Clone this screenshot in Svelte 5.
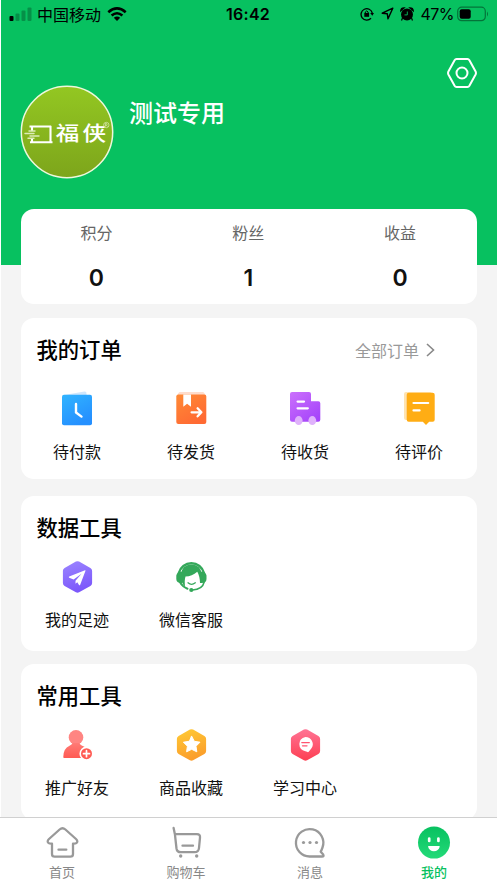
<script lang="ts">
    type Item = { icon: string; label: string };

    const stats = [
        { label: "积分", value: 0 },
        { label: "粉丝", value: 1 },
        { label: "收益", value: 0 },
    ];

    const orders: Item[] = [
        { icon: "pay", label: "待付款" },
        { icon: "ship", label: "待发货" },
        { icon: "truck", label: "待收货" },
        { icon: "review", label: "待评价" },
    ];

    const dataTools: Item[] = [
        { icon: "plane", label: "我的足迹" },
        { icon: "service", label: "微信客服" },
    ];

    const commonTools: Item[] = [
        { icon: "friend", label: "推广好友" },
        { icon: "star", label: "商品收藏" },
        { icon: "learn", label: "学习中心" },
    ];

    const tabs: Item[] = [
        { icon: "home", label: "首页" },
        { icon: "cart", label: "购物车" },
        { icon: "message", label: "消息" },
        { icon: "me", label: "我的" },
    ];

    let active = $state("me");

    const hex = "M16.9 2.600Q18.500 1.700 20.100 2.600L31.400 8.900Q33.100 9.900 33.100 11.800V24Q33.100 25.900 31.400 26.900L20.100 33.300Q18.500 34.200 16.900 33.300L5.600 26.900Q3.900 25.900 3.900 24V11.800Q3.900 9.900 5.600 8.900Z";
</script>

{#snippet glyph(name: string)}
    <svg class="glyph" viewBox="0 0 36 36" fill="none" stroke-linecap="round" stroke-linejoin="round">
        {#if name === "pay"}
            <path d="M5 4 25.500 0.500Q27 0.500 27.300 1.500L28 6H5Z" fill="#cfe6fc" />
            <rect x="3" y="3.700" width="30" height="30.500" rx="2" fill="url(#blue)" />
            <path d="M17 13V21.500L22.500 25.600" stroke="#fff" stroke-width="2.400" />
        {:else if name === "ship"}
            <path d="M7 1H30Q31 1 33 5H4Q5.500 1 7 1Z" fill="#ffdccb" />
            <rect x="3.300" y="3.600" width="30" height="29.400" rx="2" fill="url(#orange)" />
            <path d="M10.300 3.600H18V15.700L14.100 12.800 10.300 15.700Z" fill="#fff" />
            <path d="M18.600 21.300H28M24.600 17.300 28.400 21.300 24.600 25.300" stroke="#fff" stroke-width="2.300" />
        {:else if name === "truck"}
            <path d="M5 1H22Q24 1 24 3V10.300H31.300Q33.300 10.300 33.300 12.300V28.700Q33.300 30.700 31.300 30.700H5Q3 30.700 3 28.700V3Q3 1 5 1Z" fill="url(#purple)" />
            <path d="M10.600 10.600H17M10.600 17.300H20.800" stroke="#fff" stroke-width="2.300" />
            <ellipse cx="11.700" cy="29.600" rx="3.900" ry="4.500" fill="#dfb2fb" />
            <ellipse cx="25.300" cy="29.600" rx="3.900" ry="4.500" fill="#dfb2fb" />
        {:else if name === "review"}
            <rect x="3" y="1" width="28" height="28" rx="2" fill="#ffe3b0" />
            <path d="M7.700 1.700H31.700Q33.700 1.700 33.700 3.700V28.700Q33.700 30.700 31.700 30.700H28.200L25 34 21.800 30.700H7.700Q5.700 30.700 5.700 28.700V3.700Q5.700 1.700 7.700 1.700Z" fill="#ffad14" />
            <path d="M12.500 12H27.200M12.500 19.400H18.600" stroke="#fff" stroke-width="2.200" />
        {:else if name === "plane"}
            <path d={hex} fill="url(#violet)" />
            <path d="M26 11.200 10.200 17.600Q9.200 18.200 10.200 18.800L14.600 20.600 22.500 14.800 16.500 21.800V24.800L18.300 23.200 20 26Q20.700 26.800 21.200 25.700L26.500 11.700Q26.600 11 26 11.200Z" fill="#fff" />
        {:else if name === "service"}
            <path d="M5.800 14A13 13 0 0 1 31 14" stroke="#34a85a" stroke-width="2.400" />
            <path d="M8 16Q8.500 5.500 18.400 5.500T28.800 16V24H27Q26.800 17 24.300 12.700Q19 17.200 12.500 17.500Q11.300 21 12 27.500Q8 24.500 8 16Z" fill="#34a85a" />
            <path d="M9.500 12.500V24Q3.300 24.500 3.300 20V16.500Q4 12.500 9.500 12.500ZM27.500 12.500V24Q33.500 24.500 33.500 20V16.500Q32.800 12.500 27.500 12.500Z" fill="#34a85a" />
            <path d="M6.500 22.500Q9.500 27.700 14.500 29.700" stroke="#34a85a" stroke-width="2" />
            <path d="M15 23.800Q18.500 26.800 22.300 23.800" stroke="#34a85a" stroke-width="1.300" />
            <path d="M31.200 23Q29.500 30.500 19.500 31" stroke="#34a85a" stroke-width="1.500" />
            <circle cx="18.300" cy="31" r="2.100" fill="#34a85a" />
        {:else if name === "friend"}
            <circle cx="17" cy="10.400" r="7.300" fill="#ff8582" />
            <path d="M13.500 16H20.500Q21 18 25 19.500Q28 21 29 24V31H5Q4.300 31 4.300 30 4.300 21.500 10.500 18.800Q13 17.800 13.500 16Z" fill="url(#coral)" />
            <circle cx="27.500" cy="26.700" r="6.300" fill="#ff5c54" stroke="#fff" stroke-width="1.600" />
            <path d="M24.500 26.700H30.500M27.500 23.700V29.700" stroke="#fff" stroke-width="1.700" />
        {:else if name === "star"}
            <path d={hex} fill="url(#gold)" />
            <path d="M18.700 9.300 21.300 14.300 27 15.200 23 19.200 23.800 24.800 18.700 22.300 13.600 24.800 14.400 19.200 10.400 15.200 16.100 14.300Z" fill="#fff" stroke="#fff" stroke-width="1" />
        {:else if name === "learn"}
            <path d={hex} fill="url(#pink)" />
            <path d="M18.400 9.900A7.600 7.300 0 0 1 24.300 21.500L21.700 24.800Q21 25.600 20 24.700L18.400 24.200A7.600 7.300 0 0 1 18.400 9.900Z" fill="#fff" />
            <path d="M14.800 15.600H22.300M15.500 18.800H20" stroke="#ff5570" stroke-width="1.300" />
        {:else if name === "home"}
            <path d="M15.600 5.500Q18.500 3 21.400 5.500L32 15Q34.500 17.500 32.300 19.200Q31.500 19.800 29 19.700V30Q29 32.700 26.300 32.700H10.700Q8 32.700 8 30V19.700Q5.500 19.800 4.700 19.200Q2.500 17.500 5 15Z" stroke="#999" stroke-width="2.300" />
            <path d="M14.500 25.700H22.300" stroke="#999" stroke-width="2.300" />
        {:else if name === "cart"}
            <path d="M5.600 4 6.900 10.200H29Q32.400 10.200 32 13.600L31 24Q30.600 28.200 26.500 28.200H12.800Q9 28.200 8.500 24.500L6.900 10.200" stroke="#999" stroke-width="2.300" />
            <path d="M14.500 21.700H25" stroke="#999" stroke-width="2.300" />
            <circle cx="12.700" cy="32" r="1.700" fill="#999" />
            <circle cx="28.700" cy="32" r="1.700" fill="#999" />
        {:else if name === "message"}
            <path d="M17.800 32.500A13.700 13.700 0 1 1 30.500 23.500Q29.300 26.800 28.700 27.700L31.200 30.600Q32.300 32.500 30 32.500Z" stroke="#999" stroke-width="2.300" />
            <circle cx="11.500" cy="18.500" r="1.600" fill="#999" />
            <circle cx="18" cy="18.500" r="1.600" fill="#999" />
            <circle cx="24.500" cy="18.500" r="1.600" fill="#999" />
        {:else if name === "me"}
            <circle cx="18" cy="18.600" r="16" fill="url(#green)" />
            <path d="M13.200 14.600V17M22.400 14.600V17" stroke="#fff" stroke-width="2.700" />
            <path d="M12.600 22H23.200Q23.800 22 23.700 22.800Q22.500 27.200 17.900 27.200T12.100 22.800Q12 22 12.600 22Z" fill="#fff" />
        {/if}
    </svg>
{/snippet}

{#snippet grid(items: Item[])}
    <div class="grid">
        {#each items as item}
            <div class="cell">
                {@render glyph(item.icon)}
                <span>{item.label}</span>
            </div>
        {/each}
    </div>
{/snippet}

<!-- shared gradients -->
<svg class="defs" width="0" height="0">
    <defs>
        <linearGradient id="blue" x1="0" y1="0" x2=".5" y2="1"><stop stop-color="#31b4ff" /><stop offset="1" stop-color="#2590ff" /></linearGradient>
        <linearGradient id="orange" x1="0" y1="0" x2=".6" y2="1"><stop stop-color="#ff8a35" /><stop offset="1" stop-color="#ff6a33" /></linearGradient>
        <linearGradient id="purple" x1="0" y1="0" x2=".8" y2="1"><stop stop-color="#cb70fc" /><stop offset="1" stop-color="#a544fa" /></linearGradient>
        <linearGradient id="violet" x1="0" y1="0" x2=".3" y2="1"><stop stop-color="#9c86ff" /><stop offset="1" stop-color="#7c58fb" /></linearGradient>
        <linearGradient id="coral" x1="0" y1="0" x2="0" y2="1"><stop stop-color="#ff7b76" /><stop offset="1" stop-color="#ff5a53" /></linearGradient>
        <linearGradient id="gold" x1="0" y1="0" x2=".3" y2="1"><stop stop-color="#ffcb35" /><stop offset="1" stop-color="#fb9e2b" /></linearGradient>
        <linearGradient id="pink" x1="0" y1="0" x2="0" y2="1"><stop stop-color="#ff7394" /><stop offset="1" stop-color="#fd3f52" /></linearGradient>
        <linearGradient id="green" x1="0" y1="0" x2="0" y2="1"><stop stop-color="#08c160" /><stop offset="1" stop-color="#23da78" /></linearGradient>
    </defs>
</svg>

<div class="page">
    <header>
        <div class="status">
            <div class="side">
                <svg width="24" height="14" viewBox="0 0 24 14">
                    <rect x="0.500" y="9" width="4" height="5" rx="1" />
                    <rect x="6.500" y="6.500" width="4" height="7.500" rx="1" opacity=".25" />
                    <rect x="12.500" y="3.500" width="4" height="10.500" rx="1" opacity=".25" />
                    <rect x="18.500" y="0.500" width="4" height="13.500" rx="1" opacity=".25" />
                </svg>
                <span class="carrier">中国移动</span>
                <svg class="wifi" width="20" height="14" viewBox="0 0 20 14" fill="none" stroke="#000" stroke-width="2.600">
                    <path d="M1.300 5.200Q10 -2.300 18.700 5.200M4.600 8.500Q10 4 15.400 8.500" />
                    <path d="M6.800 10.800Q10 8.300 13.200 10.800L10 14Z" fill="#000" stroke="none" />
                </svg>
            </div>
            <span class="time">16:42</span>
            <div class="side right">
                <svg width="14" height="14" viewBox="0 0 14 14" fill="none" stroke="#000" stroke-width="1.300">
                    <path d="M11 11.200A5.700 5.700 0 1 1 12.300 6" />
                    <path d="M10.200 6H14L12.300 8.800Z" fill="#000" stroke="none" />
                    <rect x="4.300" y="6" width="4.800" height="3.800" fill="#000" stroke="none" />
                    <path d="M5.300 6V5Q6.700 2.800 8.100 5V6" stroke-width="1" />
                </svg>
                <svg class="locate" width="13" height="13" viewBox="0 0 13 13" fill="none" stroke="#000" stroke-width="1.400" stroke-linejoin="round">
                    <path d="M11.800 1.200 1.200 6.200 6.300 6.800 7 11.800Z" />
                </svg>
                <svg class="alarm" width="14" height="14" viewBox="0 0 14 14">
                    <circle cx="7" cy="7.500" r="6" />
                    <path d="M0.700 3.800Q1 0.800 4.200 0.900ZM13.300 3.800Q13 0.800 9.800 0.900ZM2.500 11 1.500 13.500M11.500 11 12.500 13.500" stroke="#000" stroke-width="1.200" />
                    <path d="M7.300 4.500V7.900H4.500" fill="none" stroke="#07c160" stroke-width="0.900" />
                </svg>
                <span class="percent">47%</span>
                <svg width="32" height="16" viewBox="0 0 32 16">
                    <rect x="0.700" y="1.200" width="27.600" height="13.500" rx="4" fill="none" stroke="#000" stroke-opacity=".4" stroke-width="1.200" />
                    <rect x="2.700" y="3.200" width="11" height="9.600" rx="2" />
                    <path d="M30 5.500Q32 8 30 10.500Z" opacity=".4" />
                </svg>
            </div>
        </div>

        <div class="profile">
            <svg class="avatar" viewBox="0 0 94 94">
                <defs>
                    <linearGradient id="lime" x1="0" y1="0" x2="0" y2="1"><stop stop-color="#93c722" /><stop offset="1" stop-color="#7da51b" /></linearGradient>
                </defs>
                <circle cx="47" cy="47" r="45.700" fill="url(#lime)" stroke="#eef8dc" stroke-width="1.500" />
                <g fill="none" stroke="#fff">
                    <path d="M9.500 41.500H31.200M10 57.200H32.500M30.500 41V58M12 41V46M12 53V57.500" stroke-width="2.100" />
                    <path d="M5 48.500H14M9 46H15M10 51H19M8 53.200H14" stroke="#dcebb8" stroke-width="1.400" stroke-linecap="round" />
                </g>
                <text x="30.300" y="56.500" transform="scale(1.180 1)">福</text>
                <text x="53" y="56.500" transform="scale(1.180 1)">侠</text>
                <g fill="none" stroke="#dcebb8" stroke-width="0.700">
                    <circle cx="86.300" cy="40" r="2.700" />
                    <path d="M85.400 41.600V38.500H86.600Q87.500 39.300 86.600 40.200H85.500M86.500 40.200 87.400 41.600" />
                </g>
            </svg>
            <h1>测试专用</h1>
            <svg class="settings" viewBox="0 0 30 30" fill="none" stroke="#fff" stroke-width="2" stroke-linejoin="round">
                <path d="M9.500 1H20.500Q21.700 1 22.400 2.200L28.600 13.500Q29.300 15 28.600 16.500L22.400 27.800Q21.700 29 20.500 29H9.500Q8.300 29 7.600 27.800L1.400 16.500Q0.700 15 1.400 13.500L7.600 2.200Q8.300 1 9.500 1Z" />
                <circle cx="15" cy="15" r="5.500" />
            </svg>
        </div>
    </header>

    <main>
        <section class="card stats">
            {#each stats as stat}
                <div class="stat">
                    <span>{stat.label}</span>
                    <strong>{stat.value}</strong>
                </div>
            {/each}
        </section>

        <section class="card orders">
            <div class="heading">
                <h2>我的订单</h2>
                <span class="more">
                    全部订单
                    <svg width="9" height="14" viewBox="0 0 9 14" fill="none" stroke="#888" stroke-width="1.600"><path d="M1 1 7.500 7 1 13" /></svg>
                </span>
            </div>
            {@render grid(orders)}
        </section>

        <section class="card data">
            <div class="heading"><h2>数据工具</h2></div>
            {@render grid(dataTools)}
        </section>

        <section class="card common">
            <div class="heading"><h2>常用工具</h2></div>
            {@render grid(commonTools)}
        </section>
    </main>

    <nav>
        {#each tabs as tab}
            <button class:active={active === tab.icon} onclick={() => (active = tab.icon)}>
                {@render glyph(tab.icon)}
                <span>{tab.label}</span>
            </button>
        {/each}
    </nav>
</div>

<style>
    :global(body) {
        margin: 0;
        background: #fff;
    }

    .defs {
        display: block;
    }

    .page {
        display: flex;
        flex-direction: column;
        box-sizing: border-box;
        height: 883px;
        padding-left: 1px;
        overflow: hidden;
        font-family: "Noto Sans CJK SC", sans-serif;
        color: #111;
    }

    header {
        flex: none;
        height: 265px;
        background: #07c160;
    }

    .status {
        display: grid;
        grid-template-columns: 1fr auto 1fr;
        align-items: center;
        height: 27px;
        padding: 0 8px 0 8px;
        color: #000;
    }

    .side {
        display: flex;
        align-items: center;
    }

    .right {
        justify-content: flex-end;
    }

    .carrier {
        margin-left: 4px;
        font-size: 16px;
        line-height: 24px;
    }

    .wifi {
        margin-left: 6px;
    }

    .time {
        font: 600 16px/24px Inter, sans-serif;
        letter-spacing: 0.3px;
        margin-right: 2px;
    }

    .locate {
        margin-left: 7px;
    }

    .alarm {
        margin-left: 6px;
    }

    .percent {
        margin: 0 3px 0 6px;
        font: 400 16px/24px Inter, sans-serif;
        letter-spacing: -0.5px;
    }

    .profile {
        display: flex;
        align-items: flex-start;
        padding: 30px 20px 0 19px;
    }

    .avatar {
        flex: none;
        width: 94px;
        height: 94px;
        margin-top: 28px;
    }

    .avatar text {
        fill: #fff;
        font-size: 20px;
        font-weight: 500;
    }

    h1 {
        flex: 1;
        margin: 37px 0 0 15px;
        font-size: 24px;
        font-weight: 500;
        line-height: 36px;
        color: #fff;
    }

    .settings {
        width: 30px;
        height: 30px;
        margin-top: 1px;
    }

    main {
        flex: 1;
        min-height: 0;
        padding: 0 20px 0 19.5px;
        background: #f4f4f4;
    }

    .card {
        box-sizing: border-box;
        border-radius: 13px;
        background: #fff;
    }

    .stats {
        display: grid;
        grid-template-columns: repeat(3, 1fr);
        height: 95px;
        margin-top: -56px;
        padding: 11px 1px 0 0;
    }

    .stat {
        display: flex;
        flex-direction: column;
        align-items: center;
        font-size: 16px;
        line-height: 24px;
        color: #666;
    }

    .stat strong {
        margin-top: 19px;
        font: 600 23px/30px Inter, sans-serif;
        color: #111;
    }

    .orders {
        height: 161px;
        margin-top: 14px;
        padding-top: 16px;
    }

    .data {
        height: 155px;
        margin-top: 17px;
        padding-top: 16px;
    }

    .common {
        height: 156px;
        margin-top: 13px;
        padding-top: 16px;
    }

    .heading {
        display: flex;
        align-items: center;
        justify-content: space-between;
        height: 30px;
        padding: 0 42px 0 16px;
    }

    h2 {
        margin: 0;
        font-size: 21.3px;
        font-weight: 500;
        line-height: 30px;
        color: #000;
    }

    .more {
        display: flex;
        align-items: center;
        gap: 7px;
        padding-top: 1px;
        font-size: 16px;
        color: #999;
    }

    .grid {
        display: grid;
        grid-template-columns: repeat(4, 114px);
        margin: 17px 0 0 -0.5px;
    }

    .orders .grid {
        margin-top: 27px;
    }

    .cell {
        display: flex;
        flex-direction: column;
        align-items: center;
        gap: 12px;
        font-size: 16px;
        line-height: 24px;
    }

    .glyph {
        display: block;
        width: 36px;
        height: 36px;
    }

    nav {
        display: grid;
        grid-template-columns: repeat(4, 124px);
        flex: none;
        box-sizing: border-box;
        height: 66px;
        margin-left: -1px;
        border-top: 1px solid #d0d0d0;
        background: #fff;
    }

    nav button {
        display: flex;
        flex-direction: column;
        align-items: center;
        gap: 2px;
        padding: 6px 0 0;
        border: none;
        background: none;
        font: 400 13px/20px "Noto Sans CJK SC", sans-serif;
        color: #888;
    }

    nav .active {
        font-weight: 500;
        color: #07c160;
    }
</style>
